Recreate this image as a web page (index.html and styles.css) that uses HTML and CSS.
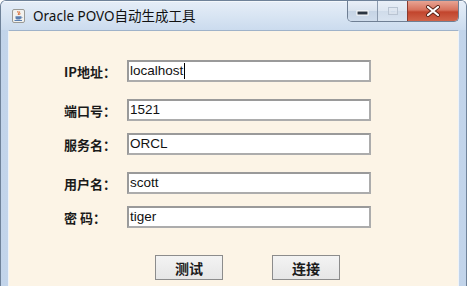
FILE: index.html
```html
<!DOCTYPE html>
<html>
<head>
<meta charset="utf-8">
<link rel="stylesheet" href="styles.css">
</head>
<body>
<div class="window">
  <div class="titlebar">
    <svg class="app-icon" width="13" height="14" viewBox="0 0 13 14">
      <rect x="0.5" y="0.5" width="12" height="13" rx="1.5" fill="#f2f2ef" stroke="#9a9a96"/>
      <path d="M6 2 C5 3.5 7.5 4 6.2 6 M7.6 2.5 C7 3.6 8.6 4.2 7.6 5.8" stroke="#d9652a" stroke-width="1" fill="none"/>
      <path d="M3.5 7.2 H9 V9 C9 10 8 10.6 6.2 10.6 C4.5 10.6 3.5 10 3.5 9 Z" fill="#5b7fb0"/>
      <path d="M9 7.8 C10.3 7.8 10.3 9.2 9 9.2" stroke="#5b7fb0" stroke-width="0.8" fill="none"/>
      <path d="M2.5 11.5 H10" stroke="#5b7fb0" stroke-width="1"/>
    </svg>
    <span class="title">Oracle POVO自动生成工具</span>
    <div class="controls">
      <div class="ctl ctl-min">
        <svg width="14" height="6" viewBox="0 0 14 6"><rect x="1" y="1" width="11" height="4" fill="#2b3542" stroke="#fff" stroke-width="1"/></svg>
      </div>
      <div class="ctl ctl-max">
        <svg width="12" height="10" viewBox="0 0 12 10"><rect x="1.5" y="1.5" width="9" height="7" fill="none" stroke="#b9c4d2" stroke-width="1"/><rect x="3" y="3" width="6" height="4" fill="none" stroke="#dfe5ee" stroke-width="1"/></svg>
      </div>
      <div class="ctl ctl-close">
        <svg width="16" height="12" viewBox="0 0 16 12"><path d="M3 2 L13 10 M13 2 L3 10" stroke="#5b2418" stroke-width="4" stroke-linecap="round"/><path d="M3 2 L13 10 M13 2 L3 10" stroke="#fff" stroke-width="2.2" stroke-linecap="round"/></svg>
      </div>
    </div>
  </div>
  <div class="client">
    <div class="form">
      <div class="row">
        <span class="label">IP地址：</span>
        <div class="field">localhost<span class="caret"></span></div>
      </div>
      <div class="row row-b">
        <span class="label">端口号：</span>
        <div class="field">1521</div>
      </div>
      <div class="row row-a">
        <span class="label">服务名：</span>
        <div class="field">ORCL</div>
      </div>
      <div class="row row-b">
        <span class="label">用户名：</span>
        <div class="field">scott</div>
      </div>
      <div class="row row-a">
        <span class="label">密 码：</span>
        <div class="field">tiger</div>
      </div>
      <div class="buttons">
        <div class="btn">测试</div>
        <div class="btn">连接</div>
      </div>
    </div>
  </div>
</div>
</body>
</html>
```
FILE: styles.css
```css
html, body {
  margin: 0;
  padding: 0;
  background: #ffffff;
}
.window {
  width: 467px;
  height: 286px;
  box-sizing: border-box;
  display: flex;
  flex-direction: column;
  border: 1px solid #6f8299;
  border-bottom: none;
  border-radius: 6px 6px 0 0;
  background: linear-gradient(90deg, #c2d4ea 0%, #d3e1f1 50%, #c2d4ea 100%);
  overflow: hidden;
}
.titlebar {
  height: 29px;
  display: flex;
  align-items: center;
  padding-left: 11px;
  background: linear-gradient(180deg, #e6eef8 0%, #d6e3f2 60%, #cbdbee 100%);
  box-shadow: inset 0 1px 0 #f4f8fc;
}
.app-icon {
  flex: none;
}
.title {
  margin-left: 8px;
  margin-top: -1px;
  font-family: "Noto Sans", "Noto Sans CJK SC", sans-serif;
  font-size: 13.5px;
  color: #111;
}
.controls {
  margin-left: auto;
  margin-right: 7px;
  align-self: flex-start;
  display: flex;
  height: 20px;
  border: 1px solid #6f7f94;
  border-top: none;
  border-radius: 0 0 5px 5px;
  overflow: hidden;
}
.ctl {
  display: flex;
  align-items: center;
  justify-content: center;
  height: 20px;
}
.ctl-min {
  width: 30px;
  background: linear-gradient(180deg, #e9eff7 0%, #d8e2ee 50%, #c6d4e5 51%, #cfdcec 100%);
  border-right: 1px solid #8a99ad;
  padding-top: 4px;
  box-sizing: border-box;
}
.ctl-max {
  width: 29px;
  background: linear-gradient(180deg, #e9eff7 0%, #dde6f1 50%, #d0dcea 51%, #d8e3f0 100%);
  border-right: 1px solid #8a3a2e;
}
.ctl-close {
  width: 50px;
  background: linear-gradient(180deg, #e8a493 0%, #d7725d 45%, #c2452d 55%, #d0644a 100%);
}
.client {
  flex: 1;
  margin: 0 7px 0 7px;
  background: #fcf4e6;
  border-top: 1px solid #9fb2c9;
  border-left: 1px solid #eef3f9;
  border-right: 1px solid #eef3f9;
}
.form {
  padding: 29px 0 0 55px;
  display: flex;
  flex-direction: column;
}
.row {
  display: flex;
  align-items: center;
  height: 22px;
}
.row-b {
  margin-top: 17px;
}
.row-a {
  margin-top: 12px;
}
.label {
  width: 63px;
  flex: none;
  font-family: "Noto Sans CJK SC", sans-serif;
  font-weight: bold;
  font-size: 13px;
  color: #1a1a1a;
}
.field {
  width: 244px;
  height: 22px;
  box-sizing: border-box;
  border: 2px solid #acacac;
  border-top-color: #9a9a9a;
  border-left-color: #9a9a9a;
  background: #ffffff;
  padding-left: 1px;
  font-family: "Liberation Sans", Arial, sans-serif;
  font-size: 13.5px;
  line-height: 18px;
  color: #111;
  display: flex;
  align-items: center;
}
.caret {
  display: inline-block;
  width: 1px;
  height: 16px;
  background: #000;
  margin-left: 1px;
}
.buttons {
  display: flex;
  gap: 49px;
  margin-top: 27px;
  padding-left: 91px;
}
.btn {
  width: 68px;
  height: 25px;
  box-sizing: border-box;
  border: 1px solid #8c8c8c;
  background: linear-gradient(180deg, #f3f3f3 0%, #e6e6e6 100%);
  display: flex;
  align-items: center;
  justify-content: center;
  font-family: "Noto Sans CJK SC", sans-serif;
  font-weight: bold;
  font-size: 14px;
  color: #1a1a1a;
}
```
